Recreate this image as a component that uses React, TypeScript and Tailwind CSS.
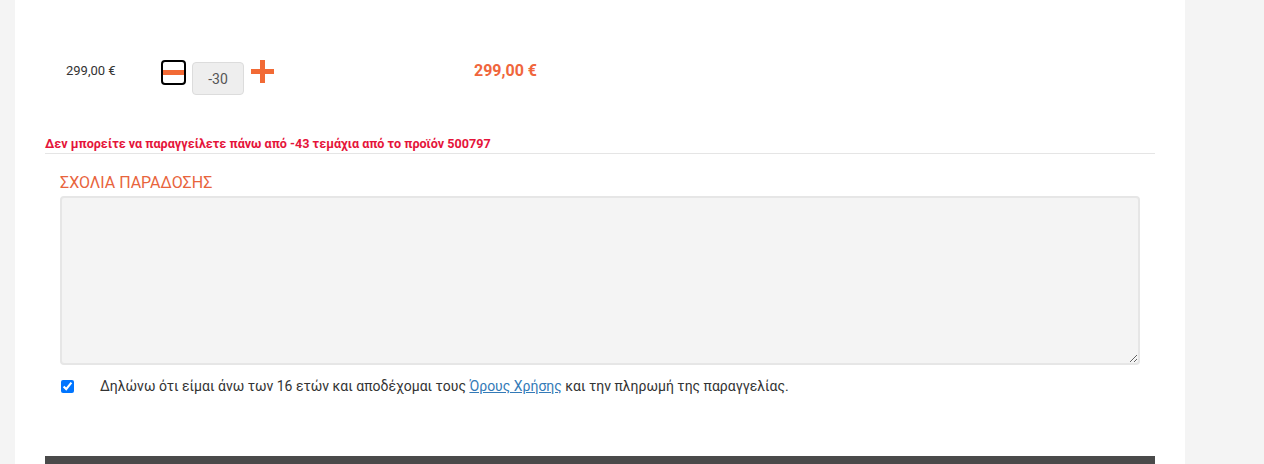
import React from 'react';

const App = () => {
    return (
        <div className="h-[464px] overflow-hidden bg-[#f4f4f4] font-['Roboto',sans-serif]">
            <div className="ml-[15px] h-full w-[1170px] bg-white px-[30px]">
                {/* Cart row */}
                <div className="flex h-[95px] items-start pt-[55px]">
                    <div className="ml-[21px] mt-[8px] w-[95px] text-[13px] leading-[16px] text-[#333]">299,00 €</div>
                    <button className="relative mt-[5px] h-[25px] w-[25px] overflow-hidden rounded-[4px] border-2 border-black bg-white">
                        <span className="absolute left-0 right-0 top-[8px] h-[5px] bg-[#f26a35]" />
                    </button>
                    <input
                        className="ml-[6px] mt-[7px] h-[33px] w-[52px] rounded-[4px] border border-[#dcdcdc] bg-[#eeeeee] text-center text-[14px] text-[#555] outline-none"
                        defaultValue="-30"
                    />
                    <button className="relative ml-[6px] mt-[4px] h-[25px] w-[25px]">
                        <span className="absolute left-[1px] right-[1px] top-[10px] h-[5px] bg-[#f26a35]" />
                        <span className="absolute bottom-[1px] left-[10px] top-[1px] w-[5px] bg-[#f26a35]" />
                    </button>
                    <div className="ml-[199px] mt-[6px] text-[16px] font-bold leading-[20px] text-[#f0663c]">299,00 €</div>
                </div>

                {/* Error */}
                <p className="mt-[40px] text-[12.6px] font-bold leading-[17px] text-[#e5143a]">
                    Δεν μπορείτε να παραγγείλετε πάνω από -43 τεμάχια από το προϊόν 500797
                </p>
                <div className="mt-[1px] border-t border-[#e5e5e5]" />

                {/* Comments */}
                <h3 className="ml-[15px] mt-[19px] text-[16px] leading-[20px] text-[#e8643c]">ΣΧΟΛΙΑ ΠΑΡΑΔΟΣΗΣ</h3>
                <textarea className="ml-[15px] mt-[3px] block h-[169px] w-[1080px] rounded-[4px] border-2 border-[#e6e6e6] bg-[#f4f4f4] outline-none" />

                {/* Terms */}
                <div className="mt-[11px] flex h-[20px] items-center">
                    <input type="checkbox" defaultChecked className="ml-[16px] h-[13px] w-[13px]" />
                    <span className="ml-[26px] text-[14px] text-[#333]">
                        Δηλώνω ότι είμαι άνω των 16 ετών και αποδέχομαι τους{' '}
                        <a href="#" className="text-[#337ab7] underline">Όρους Χρήσης</a>{' '}
                        και την πληρωμή της παραγγελίας.
                    </span>
                </div>

                <div className="mt-[60px] h-[8px] bg-[#4a4a4a]" />
            </div>
        </div>
    );
};

export default App;
